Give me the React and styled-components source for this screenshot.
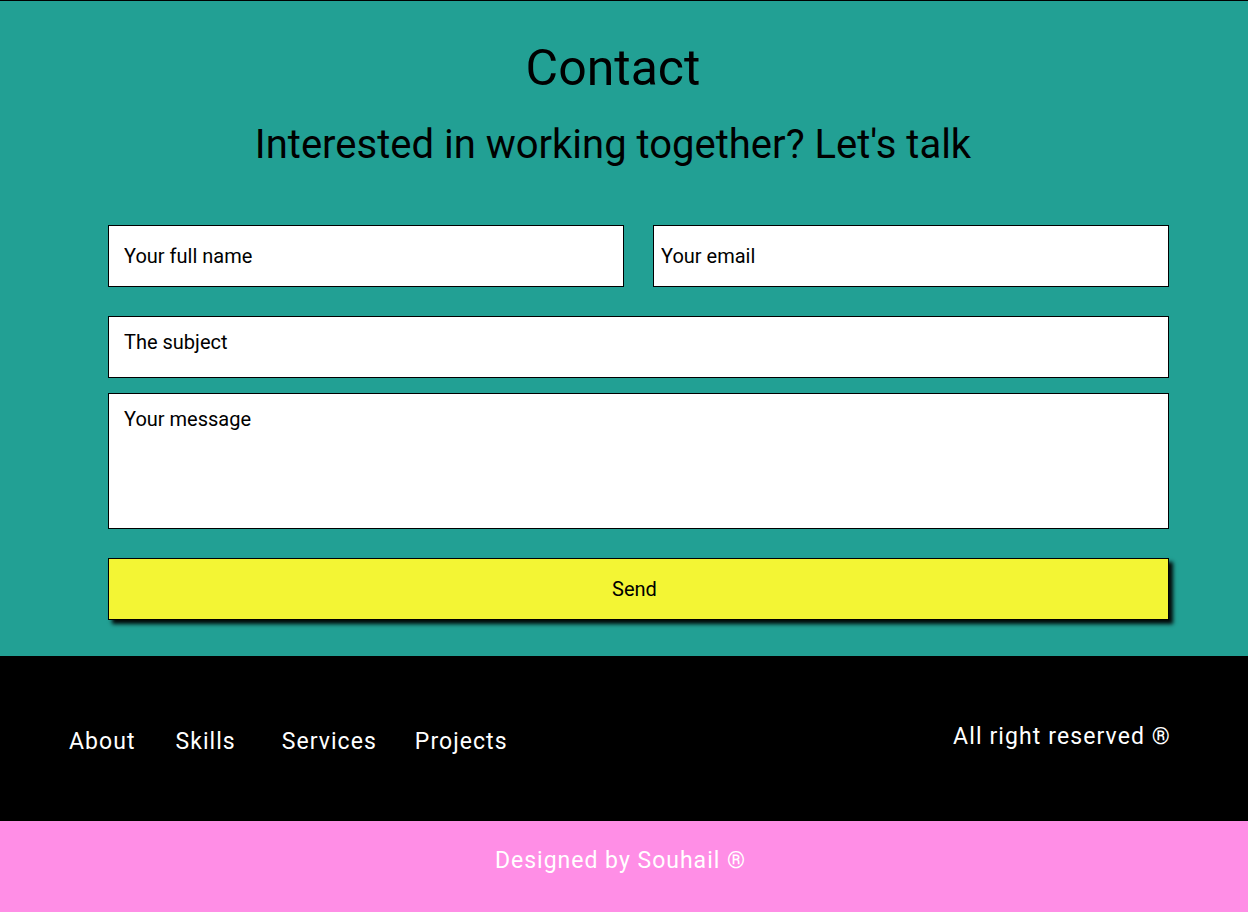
import React from "react";
import styled, { createGlobalStyle } from "styled-components";

const Global = createGlobalStyle`
  html, body { margin: 0; padding: 0; }
  body { font-family: Roboto, "Liberation Sans", Arial, sans-serif; background: #fff; }
  * { box-sizing: border-box; }
`;

const ContactSection = styled.section`
  background: #22a094;
  border-top: 1px solid #000;
  padding: 37px 79px 36px 108px;
`;

const Header = styled.header`
  margin-left: -108px;
  margin-right: -57px;
  text-align: center;
  color: #000;
`;

const Title = styled.h1`
  margin: 0;
  font-size: 50px;
  font-weight: 400;
  line-height: 60px;
`;

const Subtitle = styled.h2`
  margin: 23px 0 0;
  font-size: 40px;
  font-weight: 400;
  line-height: 48px;
`;

const Form = styled.form`
  margin-top: 56px;
  display: flex;
  flex-direction: column;
`;

const Row = styled.div`
  display: grid;
  grid-template-columns: 1fr 1fr;
  column-gap: 29px;
  margin-bottom: ${(p) => p.$after}px;
`;

const Input = styled.input`
  height: 62px;
  width: 100%;
  border: 1px solid #000;
  background: #fff;
  padding: 0 15px 0 ${(p) => p.$pl}px;
  font-family: Roboto, "Liberation Sans", sans-serif;
  font-size: 20px;
  color: #000;
  outline: none;
  &::placeholder { color: #000; opacity: 1; }
`;

const Area = styled.textarea`
  display: block;
  width: 100%;
  height: ${(p) => p.$h}px;
  margin-bottom: ${(p) => p.$after}px;
  border: 1px solid #000;
  background: #fff;
  padding: 13px 15px;
  font-family: Roboto, "Liberation Sans", sans-serif;
  font-size: 20px;
  line-height: normal;
  color: #000;
  resize: none;
  outline: none;
  &::placeholder { color: #000; opacity: 1; }
`;

const SendButton = styled.button`
  height: 62px;
  width: 100%;
  border: 1px solid #000;
  background: #f3f534;
  box-shadow: 4px 4px 4px rgba(0, 0, 0, 0.95);
  padding: 0 8px 0 0;
  font-family: Roboto, "Liberation Sans", sans-serif;
  font-size: 20px;
  color: #000;
  cursor: pointer;
`;

const Footer = styled.footer`
  background: #000;
  height: 165px;
  display: flex;
  align-items: center;
  justify-content: space-between;
  padding: 0 77px 0 69px;
`;

const Nav = styled.nav`
  display: flex;
  margin-top: 5px;
`;

const NavLink = styled.a`
  color: #fff;
  text-decoration: none;
  font-size: 23px;
  letter-spacing: 1.05px;
  line-height: 27px;
  margin-right: ${(p) => p.$gap}px;
`;

const Rights = styled.p`
  margin: 0 0 4px;
  color: #fff;
  font-size: 23px;
  letter-spacing: 1.1px;
  line-height: 27px;
`;

const Credit = styled.div`
  background: #ff8ee6;
  height: 91px;
  padding: 26px 7px 0 0;
  text-align: center;
  color: #fff;
  font-size: 23px;
  letter-spacing: 1px;
  line-height: 27px;
`;

export default function App() {
  return (
    <>
      <Global />
      <ContactSection>
        <Header>
          <Title>Contact</Title>
          <Subtitle>Interested in working together? Let's talk</Subtitle>
        </Header>
        <Form onSubmit={(e) => e.preventDefault()}>
          <Row $after={29}>
            <Input $pl={15} placeholder="Your full name" />
            <Input $pl={7} placeholder="Your email" />
          </Row>
          <Area $h={62} $after={15} placeholder="The subject" />
          <Area $h={136} $after={29} placeholder="Your message" />
          <SendButton type="submit">Send</SendButton>
        </Form>
      </ContactSection>
      <Footer>
        <Nav>
          <NavLink href="#about" $gap={40}>About</NavLink>
          <NavLink href="#skills" $gap={46}>Skills</NavLink>
          <NavLink href="#services" $gap={38}>Services</NavLink>
          <NavLink href="#projects" $gap={0}>Projects</NavLink>
        </Nav>
        <Rights>All right reserved ®</Rights>
      </Footer>
      <Credit>Designed by Souhail ®</Credit>
    </>
  );
}
